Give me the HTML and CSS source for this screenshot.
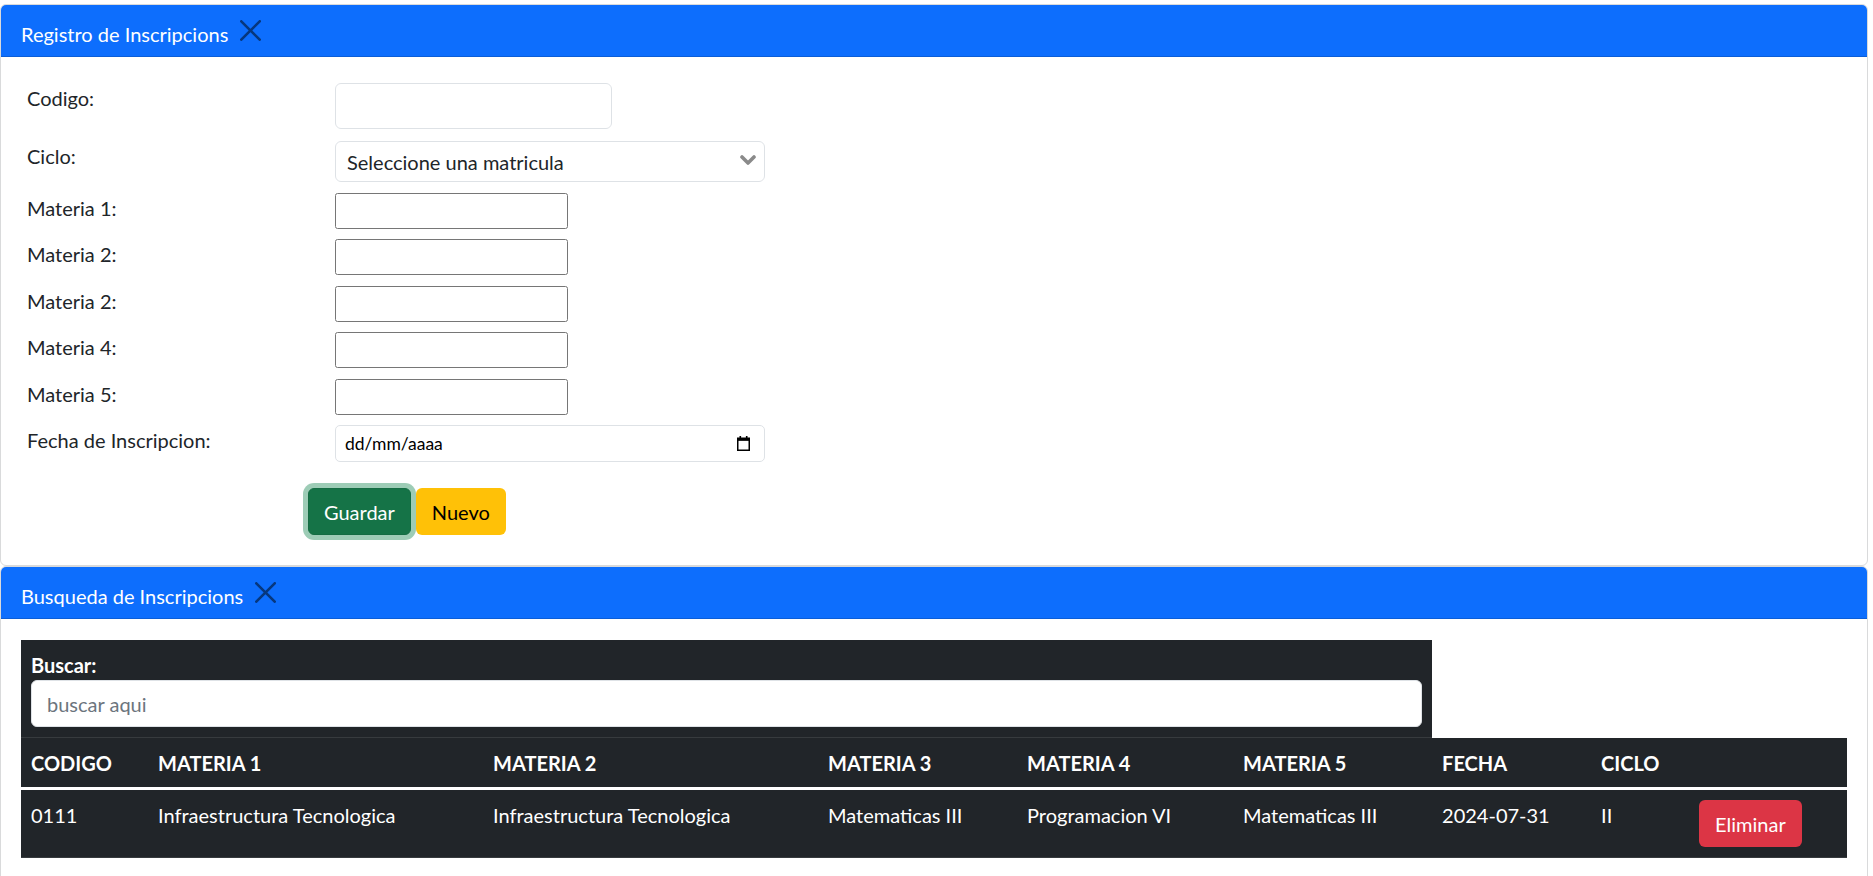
FILE: index.html
```html
<!DOCTYPE html>
<html lang="es">
<head>
    <meta charset="UTF-8">
    <meta name="viewport" content="width=device-width, initial-scale=1.0">
    <title>Inscripciones</title>
    <link rel="stylesheet" href="styles.css">
</head>
<body>
    <div class="card">
        <div class="card-header">
            <span class="card-title">Registro de Inscripcions</span>
            <button class="btn-close" type="button" aria-label="Cerrar">
                <svg width="21" height="21" viewBox="0 0 16 16"><path d="M.293.293a1 1 0 0 1 1.414 0L8 6.586 14.293.293a1 1 0 1 1 1.414 1.414L9.414 8l6.293 6.293a1 1 0 0 1-1.414 1.414L8 9.414l-6.293 6.293a1 1 0 0 1-1.414-1.414L6.586 8 .293 1.707a1 1 0 0 1 0-1.414z"/></svg>
            </button>
        </div>
        <div class="card-body">
            <form class="form-grid" onsubmit="return false;">
                <label for="codigo">Codigo:</label>
                <input id="codigo" class="form-control codigo" type="text">

                <label for="ciclo">Ciclo:</label>
                <div class="select-wrap">
                    <select id="ciclo" class="form-select">
                        <option>Seleccione una matricula</option>
                    </select>
                    <svg class="chevron" width="16" height="10" viewBox="0 0 16 10"><polyline points="2,2 8,8 14,2"/></svg>
                </div>

                <label for="materia1">Materia 1:</label>
                <input id="materia1" class="materia" type="text">

                <label for="materia2">Materia 2:</label>
                <input id="materia2" class="materia" type="text">

                <label for="materia3">Materia 2:</label>
                <input id="materia3" class="materia" type="text">

                <label for="materia4">Materia 4:</label>
                <input id="materia4" class="materia" type="text">

                <label for="materia5">Materia 5:</label>
                <input id="materia5" class="materia" type="text">

                <label for="fecha">Fecha de Inscripcion:</label>
                <div class="date-field" id="fecha">
                    <span>dd/mm/aaaa</span>
                    <svg width="13" height="15" viewBox="0 0 13 15">
                        <rect x="2.5" y="0" width="1.6" height="3"/>
                        <rect x="8.9" y="0" width="1.6" height="3"/>
                        <rect x="0.75" y="2.25" width="11.5" height="12" fill="none" stroke="#000" stroke-width="1.5"/>
                        <rect x="0.75" y="2.25" width="11.5" height="2.6"/>
                    </svg>
                </div>

                <div class="form-actions">
                    <button class="btn btn-success focused" type="button">Guardar</button>
                    <button class="btn btn-warning" type="button">Nuevo</button>
                </div>
            </form>
        </div>
    </div>

    <div class="card">
        <div class="card-header">
            <span class="card-title">Busqueda de Inscripcions</span>
            <button class="btn-close" type="button" aria-label="Cerrar">
                <svg width="21" height="21" viewBox="0 0 16 16"><path d="M.293.293a1 1 0 0 1 1.414 0L8 6.586 14.293.293a1 1 0 1 1 1.414 1.414L9.414 8l6.293 6.293a1 1 0 0 1-1.414 1.414L8 9.414l-6.293 6.293a1 1 0 0 1-1.414-1.414L6.586 8 .293 1.707a1 1 0 0 1 0-1.414z"/></svg>
            </button>
        </div>
        <div class="card-body search-body">
            <table class="table-dark">
                <colgroup>
                    <col style="width: 127px">
                    <col style="width: 335px">
                    <col style="width: 335px">
                    <col style="width: 199px">
                    <col style="width: 216px">
                    <col style="width: 199px">
                    <col style="width: 159px">
                    <col style="width: 98px">
                    <col>
                </colgroup>
                <thead>
                    <tr>
                        <th colspan="6" class="search-cell">
                            <label for="buscar">Buscar:</label>
                            <input id="buscar" class="search-input" type="text" placeholder="buscar aqui">
                        </th>
                    </tr>
                    <tr class="head-row">
                        <th>CODIGO</th>
                        <th>MATERIA 1</th>
                        <th>MATERIA 2</th>
                        <th>MATERIA 3</th>
                        <th>MATERIA 4</th>
                        <th>MATERIA 5</th>
                        <th>FECHA</th>
                        <th>CICLO</th>
                        <th></th>
                    </tr>
                </thead>
                <tbody>
                    <tr>
                        <td>0111</td>
                        <td>Infraestructura Tecnologica</td>
                        <td>Infraestructura Tecnologica</td>
                        <td>Matematicas III</td>
                        <td>Programacion VI</td>
                        <td>Matematicas III</td>
                        <td>2024-07-31</td>
                        <td>II</td>
                        <td><button class="btn btn-danger" type="button">Eliminar</button></td>
                    </tr>
                </tbody>
            </table>
        </div>
    </div>
</body>
</html>
```

FILE: styles.css
```css
body {
    margin: 0;
    font-family: Lato, "Noto Sans", sans-serif;
    font-size: 20px;
    line-height: 30px;
    color: #212529;
    background-color: #fff;
}

.card {
    width: 1868px;
    box-sizing: border-box;
    border: 1px solid #d9dadb;
    border-radius: 6px;
    overflow: hidden;
}

.card:first-child {
    margin-top: 4px;
}

.card-header {
    display: flex;
    align-items: center;
    height: 51px;
    padding: 0 20px;
    background-color: #0d6efd;
    border-bottom: 1px solid #0b5ed7;
    color: #fff;
}

.card-title {
    margin-top: 6px;
}

.btn-close {
    display: flex;
    margin-left: 12px;
    padding: 0;
    border: none;
    background: none;
    cursor: pointer;
}

.btn-close svg {
    fill: #000;
    fill-opacity: 0.5;
}

.card-body {
    padding: 26px 20px 30px 26px;
}

.search-body {
    padding: 21px 20px 20px 20px;
}

/* formulario */
.form-grid {
    display: grid;
    grid-template-columns: 308px auto;
    justify-items: start;
    align-items: start;
    row-gap: 10.5px;
}

.form-grid label {
    line-height: 30px;
}

.form-control {
    box-sizing: border-box;
    border: 1px solid #dee2e6;
    border-radius: 6px;
    font: inherit;
    padding: 0 15px;
}

.codigo {
    width: 277px;
    height: 46px;
    margin-bottom: 1.5px;
}

.select-wrap {
    position: relative;
    width: 430px;
}

.form-select {
    display: block;
    width: 100%;
    height: 41px;
    box-sizing: border-box;
    padding: 0 40px 0 11px;
    border: 1px solid #dee2e6;
    border-radius: 6px;
    background-color: #fff;
    color: #212529;
    font: inherit;
    -webkit-appearance: none;
    appearance: none;
}

.chevron {
    position: absolute;
    right: 9px;
    top: 14px;
    fill: none;
    stroke: #8a8a8a;
    stroke-width: 3.6;
    stroke-linecap: round;
    stroke-linejoin: round;
}

.materia {
    width: 233px;
    height: 36px;
    box-sizing: border-box;
    border: 1px solid #767676;
    border-radius: 2.5px;
    padding: 0 3px;
    font: inherit;
}

.date-field {
    display: flex;
    align-items: center;
    justify-content: space-between;
    width: 430px;
    height: 37px;
    box-sizing: border-box;
    padding: 0 14px 0 9px;
    border: 1px solid #dee2e6;
    border-radius: 5px;
    font-size: 17.5px;
    color: #000;
}

.form-actions {
    grid-column: 2;
    display: flex;
    gap: 5px;
    margin-top: 15.5px;
    margin-left: -27px;
}

.btn {
    font: inherit;
    line-height: 30px;
    padding: 7.5px 15px;
    border: 1px solid transparent;
    border-radius: 6px;
    cursor: pointer;
}

.btn-success {
    background-color: #157347;
    border-color: #146c43;
    color: #fff;
}

.btn-success.focused {
    box-shadow: 0 0 0 5px rgba(60, 153, 110, 0.5);
}

.btn-warning {
    background-color: #ffc107;
    color: #000;
}

.btn-danger {
    background-color: #dc3545;
    color: #fff;
}

/* tabla */
.table-dark {
    width: 100%;
    table-layout: fixed;
    border-collapse: separate;
    border-spacing: 0;
    margin-bottom: 20px;
    color: #fff;
}

.table-dark th,
.table-dark td {
    padding: 10px;
    text-align: left;
    vertical-align: top;
    background-color: #212529;
    white-space: nowrap;
}

.table-dark th {
    font-weight: bold;
}

.search-cell {
    border-bottom: 1px solid #373b3e;
}

.search-cell label {
    display: block;
}

.search-input {
    display: block;
    width: 100%;
    height: 47px;
    box-sizing: border-box;
    padding: 0 15px;
    border: 1px solid #dee2e6;
    border-radius: 6px;
    font: inherit;
    font-weight: normal;
    color: #212529;
}

.search-input::placeholder {
    color: #6c757d;
}

.head-row th {
    padding-bottom: 9px;
    border-bottom: 3px solid #fff;
}

.table-dark td {
    border-bottom: 1px solid #373b3e;
}
```
